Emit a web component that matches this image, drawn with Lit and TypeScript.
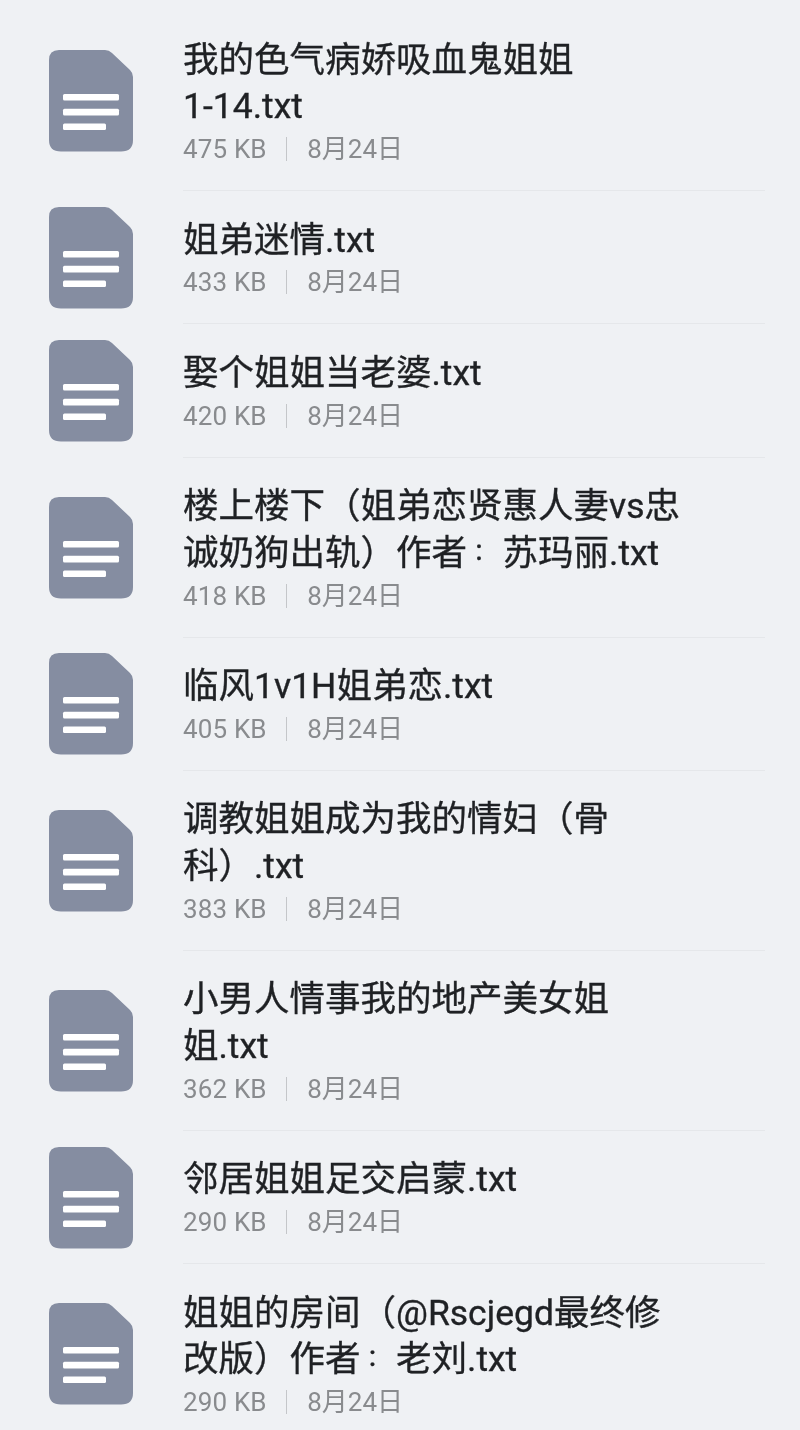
import { LitElement, html, css } from "lit";
import { customElement } from "lit/decorators.js";

const rows: [string[], string][] = [
  [["我的色气病娇吸血鬼姐姐", "1-14.txt"], "475 KB"],
  [["姐弟迷情.txt"], "433 KB"],
  [["娶个姐姐当老婆.txt"], "420 KB"],
  [["楼上楼下（姐弟恋贤惠人妻vs忠", "诚奶狗出轨）作者：苏玛丽.txt"], "418 KB"],
  [["临风1v1H姐弟恋.txt"], "405 KB"],
  [["调教姐姐成为我的情妇（骨", "科）.txt"], "383 KB"],
  [["小男人情事我的地产美女姐", "姐.txt"], "362 KB"],
  [["邻居姐姐足交启蒙.txt"], "290 KB"],
  [["姐姐的房间（@Rscjegd最终修", "改版）作者：老刘.txt"], "290 KB"],
];

const runs = (line: string) =>
  (line.match(/：|[^：]+/g) ?? []).map((run) =>
    run === "：" ? html`<span class="colon">：</span>` : run
  );

@customElement("app-root")
export class AppRoot extends LitElement {
  static styles = css`
    :host {
      display: block;
      width: 800px;
      height: 1430px;
      overflow: hidden;
      background: #eff1f4;
      font-family: "Roboto", "Noto Sans CJK SC", sans-serif;
    }
    .list { padding-top: 11px; filter: blur(0.35px); }
    .row { display: flex; align-items: center; padding-left: 49px; }
    .icon { width: 84px; height: 102px; flex: none; margin-right: 50px; display: block; }
    .body {
      flex: none;
      width: 582px;
      padding: 25.5px 0 25.16px;
      border-bottom: 1px solid #e5e7ea;
    }
    .title {
      font-size: 35.5px;
      line-height: 46.67px;
      color: #1f2124;
      white-space: nowrap;
      -webkit-text-stroke: 0.35px #1f2124;
    }
    .colon {
      font-family: "Noto Sans CJK TC", sans-serif;
      font-size: 24px;
      line-height: 0;
      vertical-align: 4px;
      margin-right: 11.5px;
    }
    .meta {
      display: flex;
      align-items: center;
      margin-top: 3px;
      height: 32px;
      line-height: 32px;
      font-size: 26px;
      color: #898b8e;
    }
    .meta span { display: block; height: 32px; }
    .size { letter-spacing: 0.15px; }
    .bar { width: 1.5px; height: 24px; background: #c4c6c9; margin: 0 20px 0 19px; }
  `;

  render() {
    return html`<div class="list">
      ${rows.map(
        ([lines, size]) => html`<div class="row">
          <svg class="icon" viewBox="0 0 84 102">
            <path d="M10 0H56Q60 0 63 3L81 20Q84 23 84 27V90Q84 101.5 72 101.5H12Q0 101.5 0 90V10Q0 0 10 0Z" fill="#858da1"/>
            <rect x="14" y="44" width="56" height="6.6" rx="1.5" fill="#fff"/>
            <rect x="14" y="58.8" width="56" height="6.6" rx="1.5" fill="#fff"/>
            <rect x="14" y="73.4" width="43" height="6.6" rx="1.5" fill="#fff"/>
          </svg>
          <div class="body">
            ${lines.map((line) => html`<div class="title">${runs(line)}</div>`)}
            <div class="meta"><span class="size">${size}</span><i class="bar"></i><span>8月24日</span></div>
          </div>
        </div>`
      )}
    </div>`;
  }
}
